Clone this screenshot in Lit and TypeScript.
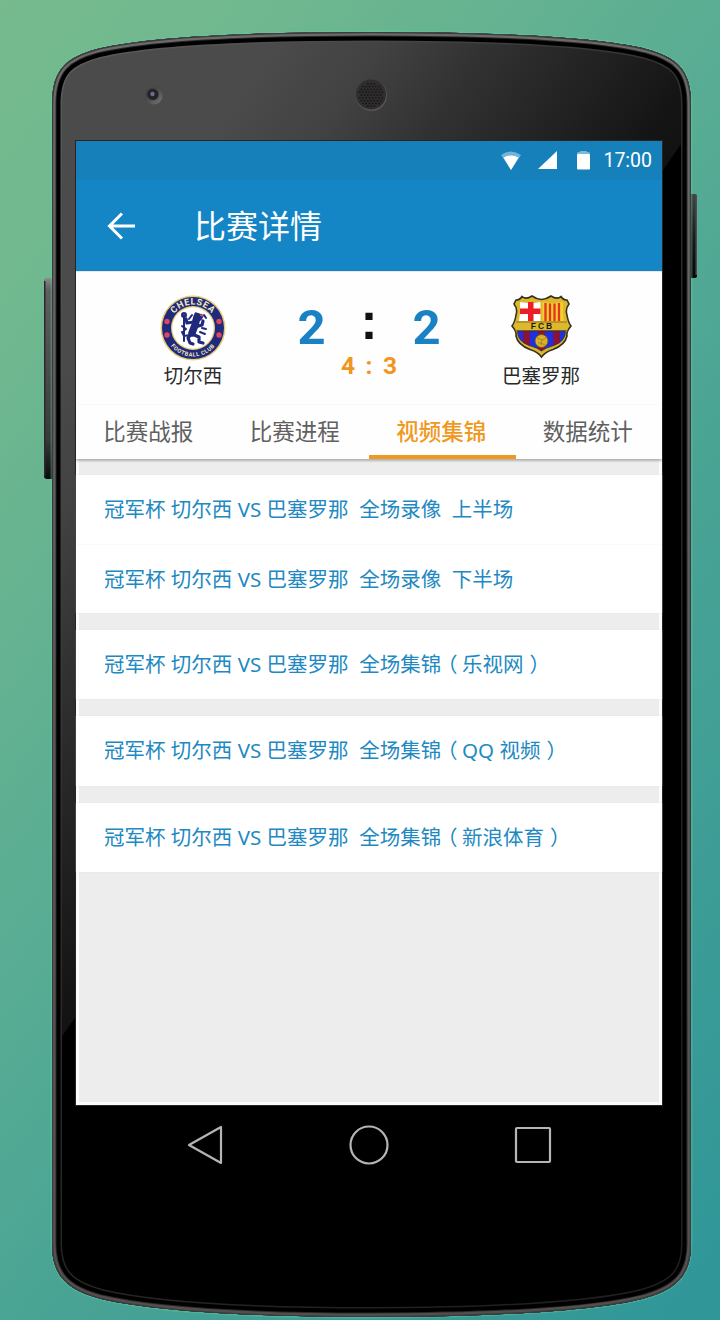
import { LitElement, html, css, svg } from "lit";
import { customElement, property } from "lit/decorators.js";

const BODY =
  "M52 104 C52 68 68 57 97 49 C150 36 260 32 371 32 C482 32 594 36 646 49 C675 57 691 68 691 104 L691 1244 C691 1276 676 1290 642 1299 C590 1312 480 1317 371 1317 C262 1317 156 1312 101 1299 C67 1290 52 1276 52 1244 Z";

@customElement("phone-shell")
class PhoneShell extends LitElement {
  static styles = css`
    :host { display: block; width: 720px; height: 1320px; }
    svg { display: block; }
  `;
  render() {
    const holes = [];
    for (let r = -4; r <= 4; r++)
      for (let c = -4; c <= 4; c++) {
        const x = c * 3.2 + (r % 2 ? 1.6 : 0);
        const y = r * 2.8;
        if (x * x + y * y < 150) holes.push(svg`<circle cx=${371 + x} cy=${95 + y} r="0.9"/>`);
      }
    return html`<svg width="720" height="1320" viewBox="0 0 720 1320">
      <defs>
        <linearGradient id="face" gradientUnits="userSpaceOnUse" x1="180" y1="180" x2="520" y2="410">
          <stop offset="0" stop-color="#4b4b4b"/><stop offset="0.22" stop-color="#424242"/>
          <stop offset="0.43" stop-color="#323232"/><stop offset="0.88" stop-color="#151515"/>
          <stop offset="1" stop-color="#101010"/>
        </linearGradient>
        <linearGradient id="rim" x1="0" y1="0" x2="0" y2="1">
          <stop offset="0" stop-color="#6c6a6b"/><stop offset="0.5" stop-color="#5c5a5b"/><stop offset="1" stop-color="#544e4f"/>
        </linearGradient>
        <linearGradient id="lip" x1="0" y1="0" x2="0.6" y2="1">
          <stop offset="0" stop-color="#5e5e5e"/><stop offset="0.5" stop-color="#2c2c2c"/><stop offset="1" stop-color="#202020"/>
        </linearGradient>
        <linearGradient id="key" x1="0" y1="0" x2="0" y2="1">
          <stop offset="0" stop-color="#8a8a8a"/><stop offset="0.06" stop-color="#5f5f5f"/>
          <stop offset="0.8" stop-color="#3a3a3a"/><stop offset="1" stop-color="#0a0a0a"/>
        </linearGradient>
        <linearGradient id="power" x1="0" y1="0" x2="0" y2="1">
          <stop offset="0" stop-color="#444"/><stop offset="0.5" stop-color="#1c1c1c"/><stop offset="1" stop-color="#060606"/>
        </linearGradient>
        <linearGradient id="lens" x1="0" y1="0" x2="1" y2="1">
          <stop offset="0" stop-color="#2c2c2c"/><stop offset="1" stop-color="#777"/>
        </linearGradient>
        <clipPath id="body"><path d=${BODY}/></clipPath>
      </defs>
      <rect x="44" y="278" width="12" height="201" rx="3" fill="url(#key)"/>
      <rect x="44" y="281" width="1.5" height="195" fill="#2a2a2a"/>
      <rect x="686" y="194" width="11" height="84" rx="2" fill="url(#power)"/>
      <rect x="695.500" y="196" width="1.500" height="79" fill="#4c4c4c"/>
      <path d=${BODY} fill="none" stroke="#5bd0a4" stroke-opacity="0.35" stroke-width="3"/>
      <g clip-path="url(#body)">
        <path d=${BODY} fill="#000"/>
        <path d="M40 20 H720 V88 L40 1068 Z" fill="url(#face)"/>
        <path d=${BODY} fill="none" stroke="url(#lip)" stroke-width="20"/>
        <path d=${BODY} fill="none" stroke="#000" stroke-width="17"/>
        <path d=${BODY} fill="none" stroke="#2a292a" stroke-width="9"/>
        <path d=${BODY} fill="none" stroke="url(#rim)" stroke-width="7"/>
        <path d=${BODY} fill="none" stroke="#3c3c3c" stroke-width="2.500"/>
      </g>
      <circle cx="154" cy="96" r="8.5" fill="url(#lens)"/>
      <circle cx="153" cy="94.500" r="5.500" fill="#222229"/>
      <circle cx="152.500" cy="94" r="2.200" fill="#6b6f86"/>
      <circle cx="371.500" cy="95.500" r="15.500" fill="#555"/>
      <circle cx="371" cy="94.500" r="15" fill="#2f2d2d"/>
      <g fill="#171717">${holes}</g>
      <rect x="75" y="140" width="588" height="966" fill="#2a2422"/>
    </svg>`;
  }
}

@customElement("chelsea-crest")
class ChelseaCrest extends LitElement {
  static styles = css`
    :host, svg { display: block; }
    .ring { font: bold 9px Roboto, sans-serif; letter-spacing: 0.6px; fill: #f4e9b8; }
    .small { font-size: 5.6px; }
  `;
  render() {
    return html`<svg width="66" height="66" viewBox="-33 -33 66 66">
      <defs>
        <path id="top" d="M-23.500 0 A23.500 23.500 0 0 1 23.500 0"/>
        <path id="bot" d="M-28.500 0 A28.500 28.500 0 0 0 28.500 0"/>
      </defs>
      <circle r="32.500" fill="#e6cf78"/><circle r="31" fill="#20297c"/>
      <circle r="22" fill="#e6cf78"/><circle r="20.700" fill="#fff"/>
      <text class="ring" text-anchor="middle"><textPath href="#top" startOffset="50%">CHELSEA</textPath></text>
      <text class="ring small" text-anchor="middle"><textPath href="#bot" startOffset="50%">FOOTBALL CLUB</textPath></text>
      <g fill="#e2455d"><circle cx="-26" cy="-6.500" r="2.700"/><circle cx="26" cy="-6.500" r="2.700"/><circle cx="-26" cy="7" r="2.700"/><circle cx="26" cy="7" r="2.700"/></g>
      <g fill="none" stroke="#20297c" stroke-linecap="round" stroke-linejoin="round">
        <path stroke-width="7.500" d="M4 -11 L2 -3 L-1 5"/>
        <path stroke-width="3.200" d="M3 -14 L9 -12 L7 -9 M1 -6 L-6 -5 L-7 -9 M2 -1 L9 -3 L10 -7 M-1 6 L6 9 L6 14 L10 15 M-2 6 L-5 10 L-3 15 L0 16"/>
        <path stroke-width="2" d="M-9 -13 L-9 13 M-3 7 L-9 8 L-11 4 L-7 1 L-11 -2 M9 0 L13 1 M7 4 L12 6 M-1 -13 L-4 -9 M11 -13 L13 -10"/>
        <circle cx="-9" cy="-13" r="2" stroke-width="2"/>
      </g>
      <path d="M7 -13 l3 1" stroke="#e2455d" stroke-width="1.500"/>
    </svg>`;
  }
}

@customElement("barcelona-crest")
class BarcelonaCrest extends LitElement {
  static styles = css`
    :host, svg { display: block; }
    .fcb { font: bold 8.5px "Liberation Sans", sans-serif; letter-spacing: 2px; fill: #1c1a08; }
  `;
  render() {
    const shield =
      "M5 5 Q9 5 11 1.500 Q15 5 21 1 Q25 4 30.500 4.500 Q36 4 40 1 Q46 5 50 1.500 Q52 5 56 5 L58 9 Q54 14 56 20 Q57 27 60 31 Q55 37 56 41 Q54 50 42 54.500 Q34 57 30.500 62 Q27 57 19 54.500 Q7 50 5 41 Q6 37 1 31 Q4 27 5 20 Q7 14 3 9 Z";
    return html`<svg width="61" height="64" viewBox="0 0 61 64">
      <defs><clipPath id="field"><path d="M6.500 36 H54.500 Q55 46 43 50.500 Q34 53 30.500 56 Q27 53 18 50.500 Q6 46 6.500 36 Z"/></clipPath></defs>
      <path d=${shield} fill="#dcb82e" stroke="#36301c" stroke-width="1.600"/>
      <path d="M9 7 Q20 9 29.500 7 V26 H8 Q10 16 9 7 Z" fill="#fff"/>
      <path d="M17 7 h5.500 v6.500 h7 v5.500 h-7 v7 h-5.500 v-7 h-8 v-5.500 h8 Z" fill="#ee1c25"/>
      <path d="M31.500 7 Q42 9 52 7 Q51 16 53 26 H31.500 Z" fill="#f7cf2c"/>
      <path d="M34.500 8v18M39 8.500v17.500M43.500 8.500v17.500M48 8v18" stroke="#e23325" stroke-width="2.300"/>
      <text class="fcb" x="31.500" y="34.300" text-anchor="middle">FCB</text>
      <path d="M5 27 H56 M3 35.500 H58" stroke="#7a651c" stroke-width="0.800"/>
      <g clip-path="url(#field)">
        <rect x="4" y="36" width="54" height="22" fill="#1d2fe0"/>
        <path d="M15.500 35v25M30.500 35v25M45.500 35v25" stroke="#8d1235" stroke-width="6.500"/>
      </g>
      <path d="M6.500 36 H54.500 Q55 46 43 50.500 Q34 53 30.500 56 Q27 53 18 50.500 Q6 46 6.500 36 Z" fill="none" stroke="#36301c" stroke-width="0.700"/>
      <circle cx="30.500" cy="46" r="6.500" fill="#d8b02a" stroke="#6b5414" stroke-width="0.800"/>
      <path d="M26 43 l5 2 l4 -2 M31 45 l-1 5 M27 48 l3 0 l4 2" stroke="#a3832a" stroke-width="0.900" fill="none"/>
    </svg>`;
  }
}

@customElement("video-row")
class VideoRow extends LitElement {
  @property() label = "";
  static styles = css`
    :host {
      display: flex; align-items: center; height: 69px; padding: 0 0 3px 28px; box-sizing: border-box;
      font: 400 20.5px "Noto Sans", "Noto Sans CJK SC", sans-serif;
      color: #2189c2; white-space: pre;
    }
    .paren { font-family: "Noto Sans CJK SC", sans-serif; font-feature-settings: "halt"; padding: 0 4.600px 0 6px; }
  `;
  render() {
    return html`<span>${this.label.split(/([（）])/).map((p) =>
      /[（）]/.test(p) ? html`<span class="paren">${p}</span>` : p)}</span>`;
  }
}

@customElement("app-root")
class AppRoot extends LitElement {
  static styles = css`
    :host {
      display: grid; width: 720px; height: 1320px; overflow: hidden;
      background: linear-gradient(128deg, #76ba8e 0%, #70b88f 15%, #5aad93 42%, #50a894 53%, #4aa494 60%, #309698 98%);
      font-family: Roboto, "Noto Sans CJK SC", sans-serif;
    }
    phone-shell, .screen { grid-area: 1 / 1; }
    .screen { margin: 141px 0 0 76px; width: 586px; display: flex; flex-direction: column; z-index: 1; height: 1044px; }
    .status {
      height: 39px; flex: none; background: #1680bb; display: flex; align-items: center; justify-content: flex-end;
      padding-right: 10px; box-sizing: border-box; color: #fff; font-size: 19.500px;
    }
    .wifi { margin-right: 17px; }
    .cell { margin-right: 20px; }
    .battery { margin-right: 13px; }
    .bar { height: 91px; flex: none; background: #1486c6; display: flex; align-items: center; color: #fff; }
    .back { margin-left: 31px; }
    .title { margin-left: 59px; font-size: 32px; line-height: 40px; padding-top: 2px; }
    .match {
      height: 133px; flex: none; background: #fefefe; display: grid; grid-template-columns: 234px 118px 226px;
      box-sizing: border-box; border-top: 1px solid #ece6e6;
    }
    .team { display: flex; flex-direction: column; align-items: center; padding-top: 23px; color: #2a2a2a; font-size: 19.500px; line-height: 28px; }
    .team span { margin-top: 2px; }
    .away span { margin-top: 4px; }
    .score { display: flex; flex-direction: column; align-items: center; font-weight: 700; }
    .goals { display: grid; grid-template-columns: 86px 29px 86px; justify-items: center; align-items: baseline; height: 80px; font-size: 49px; line-height: 111px; color: #1a82c4; }
    .goals .dots { font: bold 51px/100px "Liberation Sans", sans-serif; color: #111; align-self: start; }
    .pens { display: grid; grid-template-columns: 26px 16px 26px; justify-items: center; font-size: 24.500px; line-height: 28px; color: #f2951f; }
    .tabs { height: 55px; flex: none; display: grid; grid-template-columns: repeat(4, 1fr); background: #fefefe; z-index: 1; box-shadow: 0 2px 2px rgba(0,0,0,.25); border-top: 1px solid #f9f9f9; box-sizing: border-box; }
    .tab { display: flex; align-items: center; justify-content: center; box-sizing: border-box; font-size: 22.500px; color: #606060; border-bottom: 4px solid transparent; padding-right: 2px; }
    .tab.on { color: #f0991f; font-weight: 500; border-color: #ee9a22; }
    .list {
      flex: 1; box-sizing: border-box; background: #ededed; border: solid #fcfcfc; border-width: 0 3px 3px;
      padding-top: 16px; display: flex; flex-direction: column; gap: 17px;
    }
    .group { background: #fff; margin: 0 -3px; box-shadow: 0 0 1px #ddd; }
    .group + .group { height: 69.300px; }
    video-row + video-row { border-top: 1px solid #fafafa; }
    .nav { height: 80px; flex: none; display: flex; justify-content: space-between; align-items: center; padding: 0 110px 0 111px; box-sizing: border-box; }
  `;
  render() {
    const head = "冠军杯 切尔西 VS 巴塞罗那  ";
    const groups = [
      ["全场录像  上半场", "全场录像  下半场"],
      ["全场集锦（乐视网）"],
      ["全场集锦（QQ 视频）"],
      ["全场集锦（新浪体育）"],
    ];
    const tabs = ["比赛战报", "比赛进程", "视频集锦", "数据统计"];
    return html`
      <phone-shell></phone-shell>
      <main class="screen">
        <div class="status">
          <svg class="wifi" width="20" height="20" viewBox="0 0 20 20"><path d="M0 4 Q10 -3 20 4 L10 19 Z" fill="#fff" opacity=".4"/><path d="M2.500 6.500 Q10 2.500 17.500 6.500 L10 19 Z" fill="#fff"/></svg>
          <svg class="cell" width="19" height="20" viewBox="0 0 19 20"><path d="M19 0 V18 H0 Z" fill="#fff"/></svg>
          <svg class="battery" width="13" height="20" viewBox="0 0 13 20"><path d="M0 3V2Q0 1 3 1Q3 -1 6.500 -1Q10 -1 10 1Q13 1 13 2V3Z" fill="#fff" opacity=".45"/><rect y="3" width="13" height="15.500" rx="1" fill="#fff"/></svg>
          <span>17:00</span>
        </div>
        <header class="bar">
          <svg class="back" width="28" height="28" viewBox="0 0 28 28" fill="none" stroke="#fff" stroke-width="3"><path d="M28 14 H3 M15 1.500 L2.500 14 L15 26.500"/></svg>
          <span class="title">比赛详情</span>
        </header>
        <section class="match">
          <div class="team"><chelsea-crest></chelsea-crest><span>切尔西</span></div>
          <div class="score">
            <div class="goals"><span>2</span><span class="dots">:</span><span>2</span></div>
            <div class="pens"><span>4</span><span>:</span><span>3</span></div>
          </div>
          <div class="team away"><barcelona-crest></barcelona-crest><span>巴塞罗那</span></div>
        </section>
        <nav class="tabs">${tabs.map((t, i) => html`<div class="tab ${i === 2 ? "on" : ""}">${t}</div>`)}</nav>
        <section class="list">
          ${groups.map((g) => html`<div class="group">${g.map((t) => html`<video-row .label=${head + t}></video-row>`)}</div>`)}
        </section>
        <footer class="nav">
          <svg width="36" height="40" viewBox="0 0 36 40" fill="none" stroke="#b5b5b5" stroke-width="2.200" stroke-linejoin="round"><path d="M34 2 V38 L2 20 Z"/></svg>
          <svg width="40" height="40" viewBox="0 0 40 40" fill="none" stroke="#b5b5b5" stroke-width="2.200"><circle cx="20" cy="20" r="18.500"/></svg>
          <svg width="38" height="38" viewBox="0 0 38 38" fill="none" stroke="#b5b5b5" stroke-width="2.200"><rect x="2" y="2" width="34" height="34" rx="1"/></svg>
        </footer>
      </main>`;
  }
}
